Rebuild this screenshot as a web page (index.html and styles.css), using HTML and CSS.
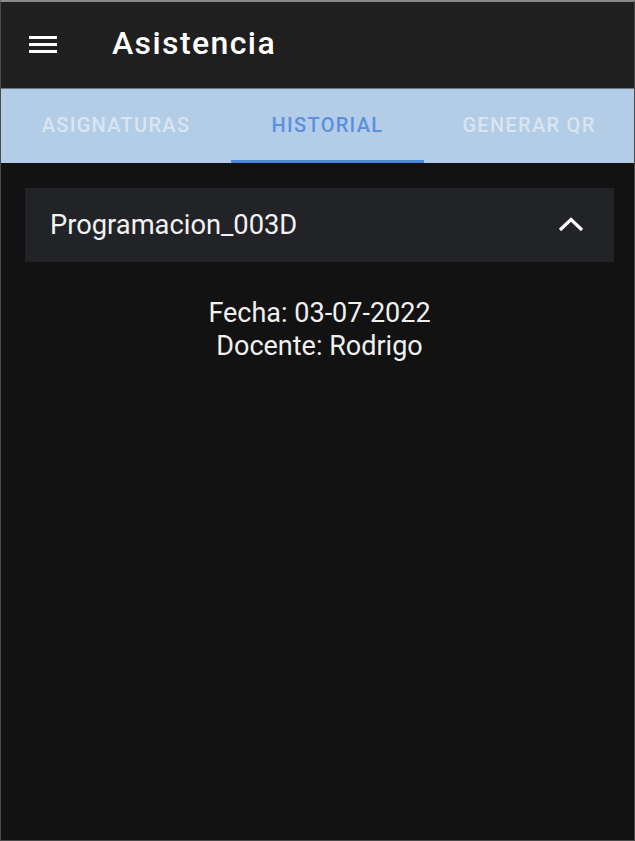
FILE: index.html
```html
<!DOCTYPE html>
<html lang="es">
<head>
<meta charset="utf-8">
<title>Asistencia</title>
<link rel="stylesheet" href="styles.css">
</head>
<body>
<div class="app">
  <header class="toolbar">
    <button class="menu-btn" aria-label="menu">
      <svg width="28" height="20" viewBox="0 0 28 20"><rect x="0" y="2" width="28" height="3" fill="#fff"/><rect x="0" y="9" width="28" height="3" fill="#fff"/><rect x="0" y="16" width="28" height="3" fill="#fff"/></svg>
    </button>
    <h1 class="title">Asistencia</h1>
  </header>
  <nav class="tabs">
    <div class="tab tab-1">ASIGNATURAS</div>
    <div class="tab tab-2 active">HISTORIAL</div>
    <div class="tab tab-3">GENERAR QR</div>
  </nav>
  <main class="content">
    <div class="panel">
      <span class="panel-title">Programacion_003D</span>
      <svg class="chevron" width="28" height="17" viewBox="0 0 28 17"><path d="M3 14 L14 3.5 L25 14" fill="none" stroke="#fff" stroke-width="3.2"/></svg>
    </div>
    <div class="details">
      <p>Fecha: 03-07-2022</p>
      <p>Docente: Rodrigo</p>
    </div>
  </main>
</div>
</body>
</html>
```

FILE: styles.css
```css
* { box-sizing: border-box; }
html, body { margin: 0; padding: 0; height: 100%; }
body {
  background: #121212;
  font-family: Roboto, "Noto Sans", sans-serif;
  color: #fff;
}
.app {
  height: 841px;
  display: flex;
  flex-direction: column;
  border: 1px solid #4a4a4a;
  border-top: 2px solid #8a8a8a;
  background: #121212;
}
.toolbar {
  height: 86px;
  background: #1f1f1f;
  display: flex;
  align-items: center;
  padding-left: 28px;
  flex: none;
}
.menu-btn {
  background: none;
  border: 0;
  padding: 0;
  width: 28px;
  height: 20px;
  display: flex;
  margin-top: -2px;
}
.title {
  margin: -4px 0 0 55px;
  font-size: 32px;
  font-weight: 500;
  letter-spacing: 1.4px;
}
.tabs {
  height: 75px;
  background: #b4cde6;
  display: flex;
  flex: none;
  border-top: 1px solid #6d7680;
}
.tab {
  display: flex;
  align-items: center;
  justify-content: center;
  font-size: 20px;
  font-weight: 500;
  letter-spacing: 1.3px;
  color: #d9e5f1;
  padding-bottom: 3px;
}
.tab-1 { width: 230px; }
.tab-2 { width: 193px; }
.tab-3 { width: 210px; }
.tab.active {
  color: #5a8fe2;
  border-bottom: 3px solid #4f86dd;
  padding-bottom: 0;
}
.content {
  flex: 1;
  padding: 25px 20px 0 24px;
}
.panel {
  height: 74px;
  background: #222327;
  display: flex;
  align-items: center;
  justify-content: space-between;
  padding: 0 29px 0 25px;
}
.panel-title {
  font-size: 27.3px;
  color: #f2f2f2;
}
.chevron { margin-top: -2px; }
.details {
  text-align: center;
  padding-top: 35px;
}
.details p {
  margin: 0;
  font-size: 27px;
  line-height: 33px;
  color: #f0f0f0;
}
```
